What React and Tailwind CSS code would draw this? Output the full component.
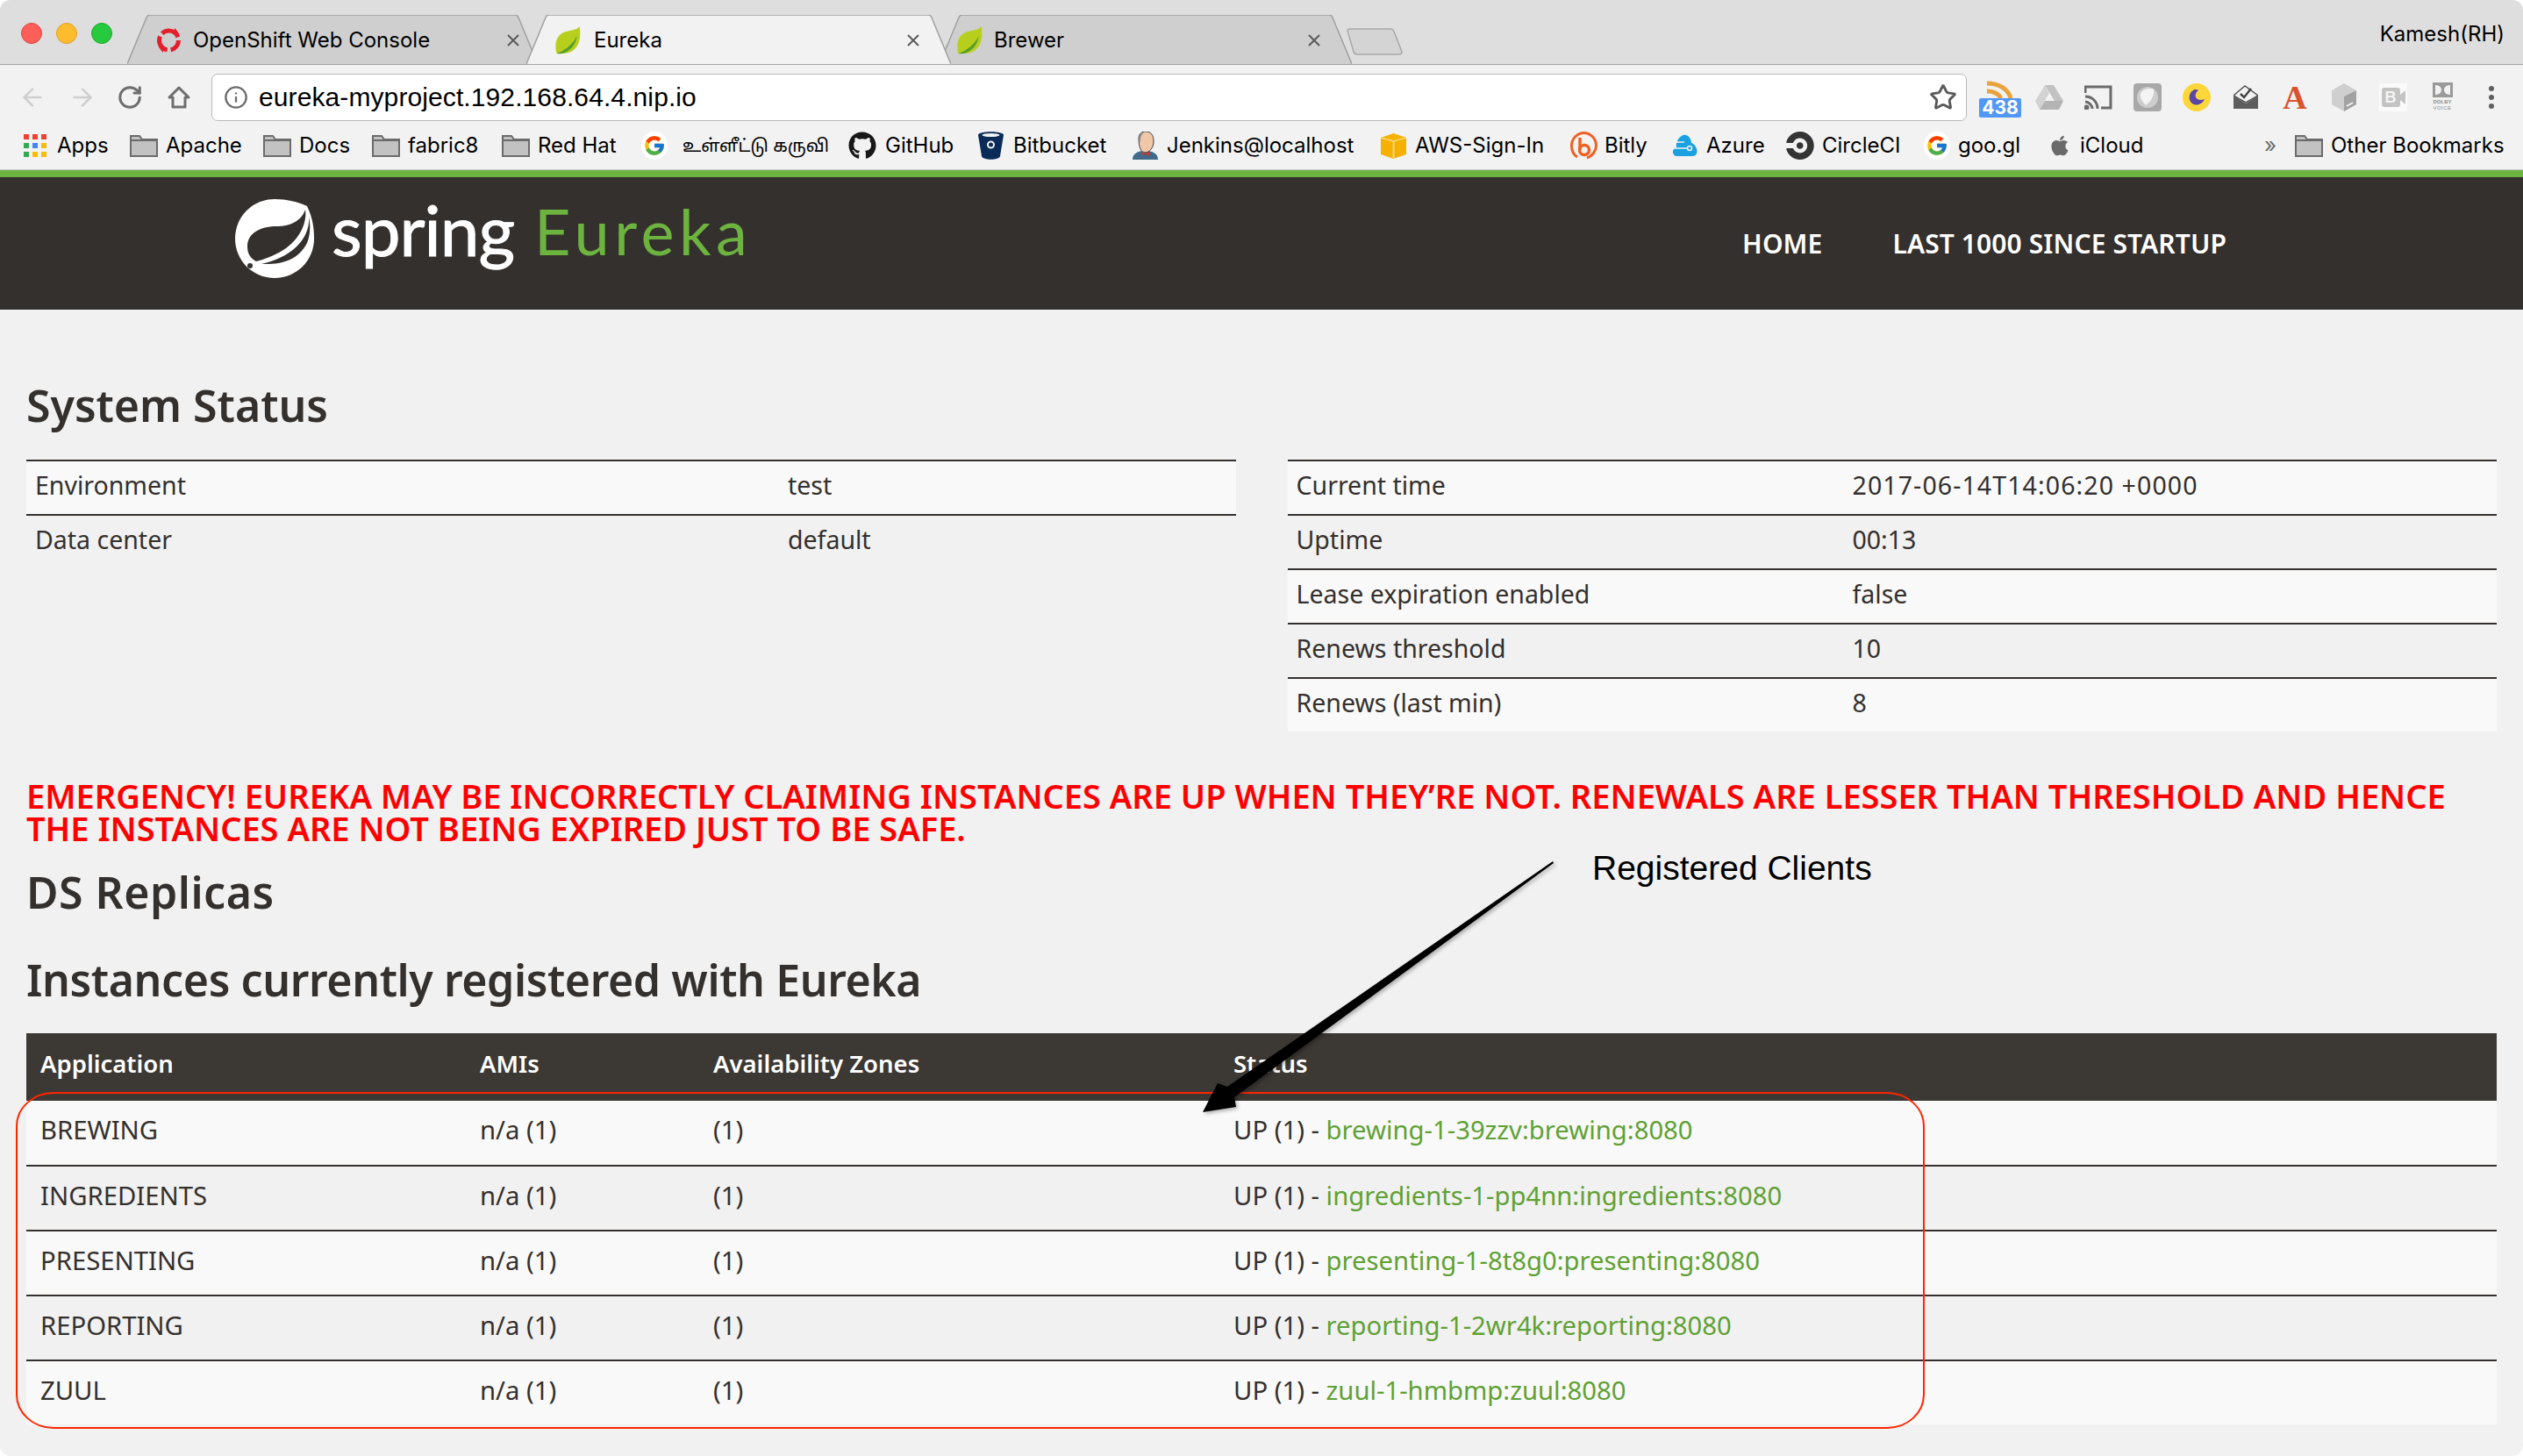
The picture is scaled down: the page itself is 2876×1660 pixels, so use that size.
import { ArrowLeft, ArrowRight, Info, RotateCw, Star } from 'lucide-react';
import { FaApple, FaGithub } from 'react-icons/fa';
import { FcGoogle } from 'react-icons/fc';
import { SiCircleci } from 'react-icons/si';

const Lights = () => (
  <div className="flex gap-[16px] ml-[24px] mt-[26px] self-start shrink-0">
    <div className="w-[24px] h-[24px] rounded-full bg-[#fc5f57] border border-[#e2463f]" />
    <div className="w-[24px] h-[24px] rounded-full bg-[#fdbc2e] border border-[#dfa023]" />
    <div className="w-[24px] h-[24px] rounded-full bg-[#27c93f] border border-[#1aab29]" />
  </div>
);

const Leaf = () => (
  <svg width="31" height="32" viewBox="0 0 30 32" className="shrink-0">
    <path d="M28 0C30 10 29 22 20 28C14 32 6 31 2 31C0 22 0 14 8 8C14 4 24 6 28 0Z" fill="#b7cf1c" />
    <path d="M2 31C10 28 20 22 25 11C24 24 12 33 2 31Z" fill="#5a9e2c" />
  </svg>
);

const OpenShift = () => (
  <svg width="31" height="30" viewBox="0 0 30 30" className="shrink-0">
    <circle cx="15" cy="15" r="11" fill="none" stroke="#e1202c" strokeWidth="5" strokeDasharray="15 4 20 4 22 4" />
    <path d="M22 1l5 7-8 0zM8 29l-5-7 8 0z" fill="#e1202c" />
  </svg>
);

const CloseX = () => (
  <svg width="16" height="16" viewBox="0 0 16 16" className="shrink-0">
    <path d="M2 2L14 14M14 2L2 14" stroke="#5a5a5a" strokeWidth="2" />
  </svg>
);

function Tab({ width, active, icon, title, padLeft, textGap, closeLeft }) {
  const d = `M0 56L22 3Q23 0 26 0L${width - 26} 0Q${width - 23} 0 ${width - 22} 3L${width} 56`;
  return (
    <div className={`relative h-[57px] -ml-[13px] first:ml-0 ${active ? 'z-10' : ''}`} style={{ width }}>
      <svg className="absolute inset-0" width={width} height="57" viewBox={`0 0 ${width} 57`}>
        <path d={d} fill={active ? '#f2f2f2' : '#cfcfcf'} stroke="#a0a0a0" strokeWidth="1.5" />
      </svg>
      <div className={`relative flex items-center h-full text-[24px] text-black font-['Inter',sans-serif] ${padLeft}`}>
        {icon}
        <span className={textGap}>{title}</span>
        <span className={`absolute ${closeLeft} top-[21px]`}>
          <CloseX />
        </span>
      </div>
    </div>
  );
}

const Home = () => (
  <svg width="28" height="28" viewBox="0 0 28 28" fill="none" stroke="#6e6e6e" strokeWidth="3">
    <path d="M14 3L25 14H21V25H7V14H3Z" strokeLinejoin="round" />
  </svg>
);

const Rss = () => (
  <div className="relative w-[48px] h-[42px] mt-[4px]">
    <svg className="absolute left-[8px] top-0" width="30" height="20" viewBox="0 0 30 20" fill="none" stroke="#e8a33d" strokeWidth="5">
      <path d="M1 3C14 3 25 9 28 20M1 12C8 12 14 15 17 20" />
    </svg>
    <div className="absolute left-0 bottom-0 w-[48px] h-[22px] rounded-[2px] bg-[#5197f5] text-white text-[21px] leading-[22px] text-center font-bold font-['Inter',sans-serif]">
      438
    </div>
  </div>
);

const Drive = () => (
  <svg width="32" height="28" viewBox="0 0 32 28">
    <path d="M11 0H21L32 18H22Z" fill="#c2c2c2" />
    <path d="M11 0L0 18L5 28L16 9Z" fill="#d2d2d2" />
    <path d="M5 28H27L32 18H11Z" fill="#b4b4b4" />
  </svg>
);

const Cast = () => (
  <svg width="32" height="28" viewBox="0 0 32 28" fill="none" stroke="#6a6a6a" strokeWidth="3">
    <path d="M1 9V2H30V26H19" />
    <path d="M1 13C9 13 15 19 15 27M1 19C5 19 9 23 9 27" />
    <circle cx="2.5" cy="25.5" r="1.5" fill="#6a6a6a" />
  </svg>
);

const Blob = () => (
  <svg width="32" height="32" viewBox="0 0 32 32">
    <rect width="32" height="32" rx="4" fill="#a8a8a8" />
    <circle cx="16" cy="16" r="12" fill="#cdcdcd" />
    <path d="M8 12C10 6 19 5 23 7C24 15 19 21 14 25C10 21 7 16 8 12Z" fill="#f4f4f4" />
  </svg>
);

const Moon = () => (
  <svg width="32" height="32" viewBox="0 0 32 32">
    <circle cx="16" cy="16" r="16" fill="#fdd63a" />
    <path d="M14 7C8 9 6 16 9 21C13 27 22 25 25 18C21 20 17 19 15 16C14 13 15 10 18 8C17 7 15 7 14 7Z" fill="#5b46a6" />
  </svg>
);

const MailCheck = () => (
  <svg width="28" height="28" viewBox="0 0 28 28">
    <path d="M0 12L13 1L28 12L14 20Z" fill="#f2f2f2" stroke="#555555" strokeWidth="1.5" />
    <path d="M8 10L12 14L20 4" fill="none" stroke="#444444" strokeWidth="2.5" />
    <path d="M0 12L14 21L28 12V27H0Z" fill="#5e5e5e" />
  </svg>
);

const Cube = () => (
  <svg width="28" height="32" viewBox="0 0 28 32">
    <path d="M14 0L28 8V24L14 32L0 24V8Z" fill="#cfcfcf" />
    <path d="M14 32V15L28 8V24Z" fill="#a2a2a2" />
    <path d="M17 26L24 22" stroke="#f2f2f2" strokeWidth="2" />
  </svg>
);

const BVideo = () => (
  <div className="flex items-center justify-center w-[32px] h-[32px] bg-[#fafafa]">
    <div className="flex items-center justify-center w-[21px] h-[22px] rounded-[3px] bg-[#c4c4c4] text-[#f4f4f4] text-[18px] font-bold leading-none font-['Liberation_Sans',sans-serif]">
      B
    </div>
    <svg width="6" height="16" viewBox="0 0 6 16">
      <path d="M0 5L6 0V16L0 11Z" fill="#c4c4c4" />
    </svg>
  </div>
);

const Dolby = () => (
  <div className="flex flex-col items-center w-[24px] font-['Liberation_Sans',sans-serif] text-[6px] leading-[7px] text-[#8a8a8a]">
    <svg width="23" height="17" viewBox="0 0 23 17">
      <rect width="23" height="17" fill="#9a9a9a" />
      <path d="M3 3V14C8 14 10 11 10 8.5C10 6 8 3 3 3ZM20 3V14C15 14 13 11 13 8.5C13 6 15 3 20 3Z" fill="#f2f2f2" />
    </svg>
    <span className="mt-[2px] font-bold">DOLBY</span>
    <span className="tracking-[0.5px]">VOICE</span>
  </div>
);

const Kebab = () => (
  <div className="flex flex-col gap-[4px]">
    <div className="w-[6px] h-[6px] rounded-full bg-[#5f5f5f]" />
    <div className="w-[6px] h-[6px] rounded-full bg-[#5f5f5f]" />
    <div className="w-[6px] h-[6px] rounded-full bg-[#5f5f5f]" />
  </div>
);

const Folder = () => (
  <svg width="32" height="25" viewBox="0 0 32 25">
    <path d="M1 24V1H11L14 5H31V24Z" fill="#c2c2c2" stroke="#6b6b6b" strokeWidth="2" />
    <path d="M1 6H31" stroke="#6b6b6b" strokeWidth="2" />
  </svg>
);

const AppsGrid = () => (
  <svg width="26" height="26" viewBox="0 0 26 26">
    <rect x="0" y="0" width="6" height="6" fill="#ea4335" />
    <rect x="10" y="0" width="6" height="6" fill="#ea4335" />
    <rect x="20" y="0" width="6" height="6" fill="#ea4335" />
    <rect x="0" y="10" width="6" height="6" fill="#34a853" />
    <rect x="10" y="10" width="6" height="6" fill="#4285f4" />
    <rect x="20" y="10" width="6" height="6" fill="#fbbc05" />
    <rect x="0" y="20" width="6" height="6" fill="#34a853" />
    <rect x="10" y="20" width="6" height="6" fill="#fbbc05" />
    <rect x="20" y="20" width="6" height="6" fill="#fbbc05" />
  </svg>
);

const Google = () => (
  <div className="flex items-center justify-center w-[30px] h-[32px] rounded-full bg-white">
    <FcGoogle size={26} />
  </div>
);

const Bitbucket = () => (
  <svg width="29" height="32" viewBox="0 0 29 32">
    <path d="M0 4C0 -1 29 -1 29 4L25 28C24 33 5 33 4 28Z" fill="#0a2a57" />
    <ellipse cx="14.5" cy="4" rx="10" ry="2" fill="#f2f2f2" />
    <circle cx="14.5" cy="15" r="3.5" fill="none" stroke="#f2f2f2" strokeWidth="2" />
  </svg>
);

const Jenkins = () => (
  <svg width="29" height="32" viewBox="0 0 29 32">
    <path d="M0 32C0 25 6 22 14 22C23 22 29 25 29 32Z" fill="#3f6a8a" />
    <path d="M7 8C7 2 11 0 15 0C21 0 24 4 24 11C24 19 19 24 14 24C10 24 7 18 7 8Z" fill="#f0c8a8" stroke="#3a3a3a" strokeWidth="1" />
    <path d="M7 11C6 5 9 1 13 1C9 4 9 8 9 12Z" fill="#8a8a8a" />
    <path d="M14 25L10 23V28ZM14 25L19 23V28Z" fill="#d33833" />
  </svg>
);

const Aws = () => (
  <svg width="29" height="29" viewBox="0 0 29 29">
    <path d="M14.5 0L29 5V24L14.5 29L0 24V5Z" fill="#f5b000" />
    <path d="M0 5L14.5 9L29 5" fill="none" stroke="#fbd97a" strokeWidth="1.5" />
    <path d="M14.5 9V29" stroke="#fbd97a" strokeWidth="2" />
  </svg>
);

const Bitly = () => (
  <svg width="31" height="32" viewBox="0 0 31 32" fill="none" stroke="#ee6123" strokeWidth="3">
    <path d="M8 29C3 26 1.5 21 1.5 16C1.5 8 8 1.5 15.5 1.5C23 1.5 29.5 8 29.5 16C29.5 22 25 28 19 30" />
    <path d="M11 7V21" strokeWidth="3.5" />
    <circle cx="16" cy="21" r="5.5" strokeWidth="3.5" />
  </svg>
);

const Azure = () => (
  <svg width="32" height="26" viewBox="0 0 32 26">
    <path d="M8 25C2 25 1 17 7 15C6 10 9 3 15 1C20 0 24 5 24 10C30 11 34 24 26 25Z" fill="#1ba1e2" />
    <path d="M1 9H16M5 16H20" stroke="#f2f2f2" strokeWidth="1.5" />
    <circle cx="22" cy="16" r="2.5" fill="none" stroke="#f2f2f2" strokeWidth="1.5" />
  </svg>
);

const bookmarks = [
  { label: 'Apps', w: 'w-[121px]', slot: 'w-[38px]', icon: <AppsGrid /> },
  { label: 'Apache', w: 'w-[152px]', slot: 'w-[41px]', icon: <Folder /> },
  { label: 'Docs', w: 'w-[124px]', slot: 'w-[41px]', icon: <Folder /> },
  { label: 'fabric8', w: 'w-[148px]', slot: 'w-[41px]', icon: <Folder /> },
  { label: 'Red Hat', w: 'w-[159px]', slot: 'w-[41px]', icon: <Folder /> },
  { label: 'உள்ளீட்டு கருவி', w: 'w-[236px]', slot: 'w-[47px]', text: 'text-[20px]', icon: <Google /> },
  { label: 'GitHub', w: 'w-[148px]', slot: 'w-[42px]', icon: <FaGithub size={32} color="#181717" /> },
  { label: 'Bitbucket', w: 'w-[176px]', slot: 'w-[40px]', icon: <Bitbucket /> },
  { label: 'Jenkins@localhost', w: 'w-[283px]', slot: 'w-[39px]', icon: <Jenkins /> },
  { label: 'AWS-Sign-In', w: 'w-[216px]', slot: 'w-[39px]', icon: <Aws /> },
  { label: 'Bitly', w: 'w-[114px]', slot: 'w-[39px]', icon: <Bitly /> },
  { label: 'Azure', w: 'w-[132px]', slot: 'w-[41px]', icon: <Azure /> },
  { label: 'CircleCI', w: 'w-[157px]', slot: 'w-[41px]', icon: <SiCircleci size={32} color="#343434" /> },
  { label: 'goo.gl', w: 'w-[142px]', slot: 'w-[39px]', icon: <Google /> },
  { label: 'iCloud', w: 'w-[246px]', slot: 'w-[36px]', icon: <FaApple size={26} color="#6a6a6a" /> },
];

function ChromeBar() {
  return (
    <div className="font-['Inter','Noto_Sans_Tamil',sans-serif]">
      <div className="flex items-end h-[74px] bg-[#dedede] border-b border-[#a5a5a5]">
        <Lights />
        <div className="flex items-end ml-[17px] -mb-px">
          <Tab width={468} icon={<OpenShift />} title="OpenShift Web Console" padLeft="pl-[32px]" textGap="ml-[12px]" closeLeft="left-[432px]" />
          <Tab width={484} active icon={<Leaf />} title="Eureka" padLeft="pl-[32px]" textGap="ml-[14px]" closeLeft="left-[433px]" />
          <Tab width={470} icon={<Leaf />} title="Brewer" padLeft="pl-[19px]" textGap="ml-[12px]" closeLeft="left-[419px]" />
        </div>
        <svg className="ml-[-6px] mb-[10px]" width="64" height="31" viewBox="0 0 64 31">
          <path d="M1 3Q1 1 4 1H50Q53 1 54 4L63 27Q63 30 60 30H12Q9 30 8 27Z" fill="#d4d4d4" stroke="#a8a8a8" strokeWidth="1.5" />
        </svg>
        <span className="ml-auto mr-[21px] self-start mt-[23px] text-[24px] leading-[32px] text-black">Kamesh(RH)</span>
      </div>

      <div className="flex items-center h-[66px] pl-[23px] pt-[7px] bg-[#f2f2f2]">
        <ArrowLeft size={32} strokeWidth={2} color="#cfcfcf" className="-ml-[2px]" />
        <ArrowRight size={32} strokeWidth={2} color="#cfcfcf" className="ml-[25px]" />
        <RotateCw size={30} strokeWidth={2.4} color="#6e6e6e" className="ml-[23px]" />
        <span className="ml-[27px]">
          <Home />
        </span>
        <div className="flex items-center w-[2001px] h-[54px] ml-[23px] pl-[13px] pr-[10px] rounded-[7px] bg-white border border-[#b9b9b9]">
          <Info size={28} strokeWidth={2} color="#6e6e6e" />
          <span className="ml-[12px] text-[30px] tracking-[0.1px] text-black font-['Liberation_Sans',sans-serif]">eureka-myproject.192.168.64.4.nip.io</span>
          <Star size={32} strokeWidth={2.2} color="#5a5a5a" className="ml-auto" />
        </div>
        <div className="flex items-center ml-[10px]">
          <div className="flex items-center justify-center w-14"><Rss /></div>
          <div className="flex items-center justify-center w-14"><Drive /></div>
          <div className="flex items-center justify-center w-14"><Cast /></div>
          <div className="flex items-center justify-center w-14"><Blob /></div>
          <div className="flex items-center justify-center w-14"><Moon /></div>
          <div className="flex items-center justify-center w-14"><MailCheck /></div>
          <div className="flex items-center justify-center w-14 text-[38px] leading-[34px] font-bold text-[#d9532c] font-['Liberation_Serif',serif]">A</div>
          <div className="flex items-center justify-center w-14"><Cube /></div>
          <div className="flex items-center justify-center w-14"><BVideo /></div>
          <div className="flex items-center justify-center w-14"><Dolby /></div>
          <div className="flex items-center justify-center w-14"><Kebab /></div>
        </div>
      </div>

      <div className="flex items-center h-[54px] pl-[27px] pb-[1px] bg-[#f2f2f2] border-b border-[#c8c8c8] text-[24px] text-black">
        {bookmarks.map((b) => (
          <div key={b.label} className={`flex items-center shrink-0 ${b.w}`}>
            <span className={`flex items-center shrink-0 ${b.slot}`}>{b.icon}</span>
            <span className={`whitespace-nowrap ${b.text || ''}`}>{b.label}</span>
          </div>
        ))}
        <span className="w-[35px] text-[#6a6a6a]">»</span>
        <span className="flex items-center w-[41px]"><Folder /></span>
        <span className="whitespace-nowrap">Other Bookmarks</span>
      </div>
    </div>
  );
}

function SpringHeader() {
  return (
    <div className="flex items-center justify-between h-[159px] pl-[268px] pr-[338px] bg-[#34302d] border-t-[8px] border-[#6db33f] font-['Noto_Sans',sans-serif]">
      <div className="flex items-center mb-[12px]">
        <svg width="90" height="90" viewBox="0 0 90 90">
          <path d="M45 0C58 0 72 3 82 8C88 20 90 32 90 45C90 70 70 90 45 90C20 90 0 70 0 45C0 20 20 0 45 0Z" fill="#ffffff" />
          <path d="M80 12C76 24 64 31 48 31C30 31 14 38 14 54C14 62 17 67 24 71C50 64 70 52 78 30C80 24 81 18 80 12Z" fill="#34302d" />
          <path d="M84 20C86 44 66 66 30 74C52 75 72 70 82 50C86 40 86 30 84 20Z" fill="#34302d" />
          <circle cx="17" cy="76" r="3" fill="#34302d" />
        </svg>
        <span className="ml-[20px] mb-[21px] text-[80px] leading-[64px] text-white font-['Lato',sans-serif] tracking-[-1px] [-webkit-text-stroke:1px_#ffffff]">spring</span>
        <span className="ml-[23px] mb-[18px] text-[72px] leading-[64px] text-[#6db33f] font-['Lato',sans-serif] tracking-[5.5px]">Eureka</span>
      </div>
      <div className="flex gap-[80px] text-[30px] font-semibold text-white tracking-[0.1px]">
        <span>HOME</span>
        <span>LAST 1000 SINCE STARTUP</span>
      </div>
    </div>
  );
}

function InfoTable({ rows, cols }) {
  return (
    <div className="text-[28.5px] text-[#34302d]">
      {rows.map(([k, v, valueClass], i) => (
        <div key={k} className={`grid items-center h-[62px] pb-[6px] border-t-2 border-[#34302d] ${cols} ${i % 2 === 0 ? 'bg-[#f9f9f9]' : 'bg-[#f1f1f1]'}`}>
          <div className="pl-[10px]">{k}</div>
          <div className={`pl-[10px] ${valueClass || ''}`}>{v}</div>
        </div>
      ))}
    </div>
  );
}

const instances = [
  ['BREWING', 'brewing-1-39zzv:brewing:8080'],
  ['INGREDIENTS', 'ingredients-1-pp4nn:ingredients:8080'],
  ['PRESENTING', 'presenting-1-8t8g0:presenting:8080'],
  ['REPORTING', 'reporting-1-2wr4k:reporting:8080'],
  ['ZUUL', 'zuul-1-hmbmp:zuul:8080'],
];

function InstanceTable() {
  return (
    <div className="text-[29.25px] text-[#34302d]">
      <div className="grid grid-cols-[485px_266px_593px_1fr] items-center h-[77px] pb-[7px] pl-[16px] bg-[#3c3833] text-white text-[27.5px] font-semibold">
        <div>Application</div>
        <div className="pl-[16px]">AMIs</div>
        <div className="pl-[16px]">Availability Zones</div>
        <div className="pl-[16px]">Status</div>
      </div>
      {instances.map(([name, id], i) => (
        <div
          key={name}
          className={`grid grid-cols-[485px_266px_593px_1fr] items-center pb-[5px] pl-[16px] border-[#34302d] ${i === 0 ? 'h-[73px]' : 'h-[74px] border-t-2'} ${i % 2 === 0 ? 'bg-[#f9f9f9]' : 'bg-[#f1f1f1]'}`}
        >
          <div>{name}</div>
          <div className="pl-[16px]">n/a (1)</div>
          <div className="pl-[16px]">(1)</div>
          <div className="pl-[16px]">
            UP (1) - <span className="text-[#5fa134]">{id}</span>
          </div>
        </div>
      ))}
    </div>
  );
}

export default function App() {
  return (
    <div className="relative w-[2876px] h-[1660px] overflow-hidden rounded-[12px] bg-[#f1f1f1]">
      <ChromeBar />
      <SpringHeader />

      <div className="px-[30px] font-['Noto_Sans',sans-serif] text-[#34302d]">
        <h2 className="mt-[76px] text-[50px] leading-[66px] font-semibold">System Status</h2>
        <div className="grid grid-cols-2 gap-[59px] mt-[29px] h-[310px]">
          <InfoTable rows={[['Environment', 'test'], ['Data center', 'default']]} cols="grid-cols-[858px_1fr]" />
          <InfoTable
            rows={[
              ['Current time', '2017-06-14T14:06:20 +0000', 'tracking-[1.1px]'],
              ['Uptime', '00:13'],
              ['Lease expiration enabled', 'false'],
              ['Renews threshold', '10'],
              ['Renews (last min)', '8'],
            ]}
            cols="grid-cols-[634px_1fr]"
          />
        </div>
        <p className="mt-[55px] text-[38px] leading-[37px] font-semibold text-[#ff0000] whitespace-nowrap">
          EMERGENCY! EUREKA MAY BE INCORRECTLY CLAIMING INSTANCES ARE UP WHEN THEY’RE NOT. RENEWALS ARE LESSER THAN THRESHOLD AND HENCE
          <br />
          THE INSTANCES ARE NOT BEING EXPIRED JUST TO BE SAFE.
        </p>
        <h2 className="mt-[21px] text-[50px] leading-[66px] font-semibold tracking-[0.5px]">DS Replicas</h2>
        <h2 className="mt-[34px] text-[50px] leading-[66px] font-semibold tracking-[-0.4px]">Instances currently registered with Eureka</h2>
        <div className="mt-[28px]">
          <InstanceTable />
        </div>
      </div>

      {/* annotation drawn on top of the page */}
      <svg className="absolute inset-0 pointer-events-none" width="2876" height="1660" viewBox="0 0 2876 1660">
        <rect x="19" y="1246" width="2174" height="382" rx="42" ry="38" fill="none" stroke="#ff2600" strokeWidth="2" />
        <polygon
          points="1770,982 1771,984 1407,1251 1409,1262 1371,1268 1388,1235 1399,1239"
          fill="#000000"
          className="drop-shadow-[2px_2px_2px_rgba(0,0,0,0.3)]"
        />
      </svg>
      <span className="absolute left-[1815px] top-[965px] text-[39px] leading-[50px] text-black font-['Liberation_Sans',sans-serif]">
        Registered Clients
      </span>
    </div>
  );
}
